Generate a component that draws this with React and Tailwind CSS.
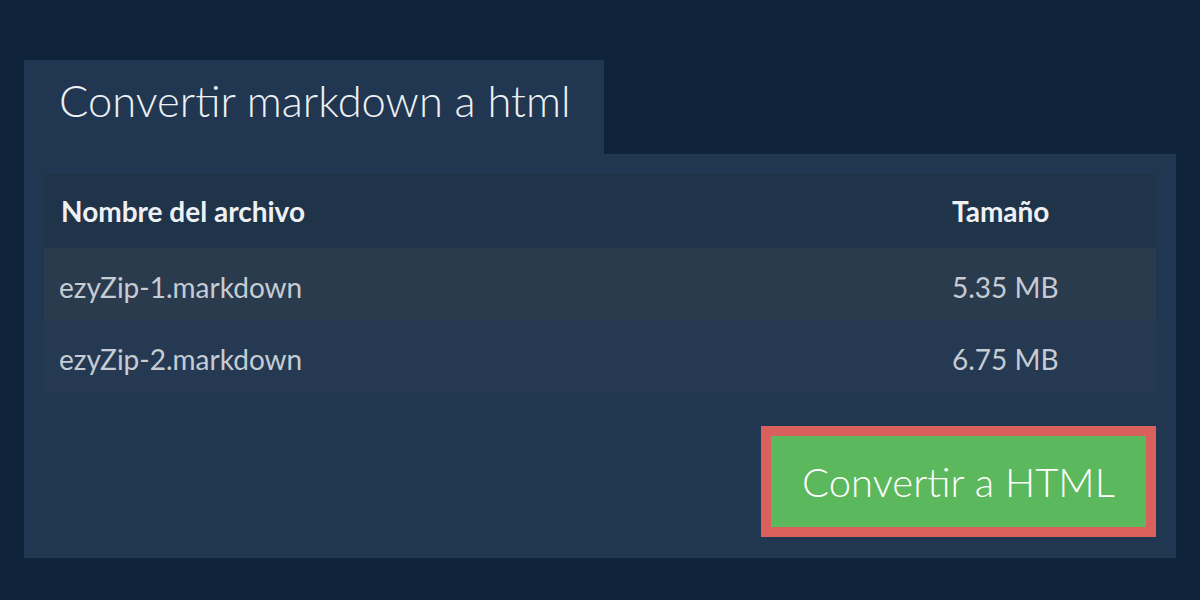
import React from 'react';

const FILES = [
  { name: 'ezyZip-1.markdown', size: '5.35 MB', bg: 'bg-[#2b3b4e]' },
  { name: 'ezyZip-2.markdown', size: '6.75 MB', bg: 'bg-[#253a52]' },
];

export default function App() {
  return (
    <div
      className="w-[1200px] h-[600px] bg-[#0f233a] pt-[60px] px-[24px]"
      style={{ fontFamily: 'Lato, "Open Sans", sans-serif' }}
    >
      <div className="w-[580px] h-[94px] bg-[#213650] pl-[35px] flex items-center">
        <h1 className="text-[43.5px] font-light text-[#eef1f4] leading-none -mt-[12px]">
          Convertir markdown a html
        </h1>
      </div>

      <div className="h-[404px] bg-[#213650] px-[20px] pt-[20px]">
        <div className="w-full">
          <div className="h-[74px] bg-[#1f3349] flex items-center text-[28px] font-bold text-[#eef1f4]">
            <div className="flex-1 pl-[17px]">Nombre del archivo</div>
            <div className="w-[204px]">Tamaño</div>
          </div>
          {FILES.map((f) => (
            <div key={f.name} className={`h-[72px] ${f.bg} flex items-center text-[28px] text-[#c5ccd4]`}>
              <div className="flex-1 pl-[15px] pt-[6px]">{f.name}</div>
              <div className="w-[204px] pt-[6px]">{f.size}</div>
            </div>
          ))}
        </div>

        <div className="flex justify-end mt-[34px]">
          <button className="h-[111px] w-[395px] border-[10px] border-[#d9605c] bg-[#5cb85c] text-white text-[40px] font-light leading-none">
            Convertir a HTML
          </button>
        </div>
      </div>
    </div>
  );
}
